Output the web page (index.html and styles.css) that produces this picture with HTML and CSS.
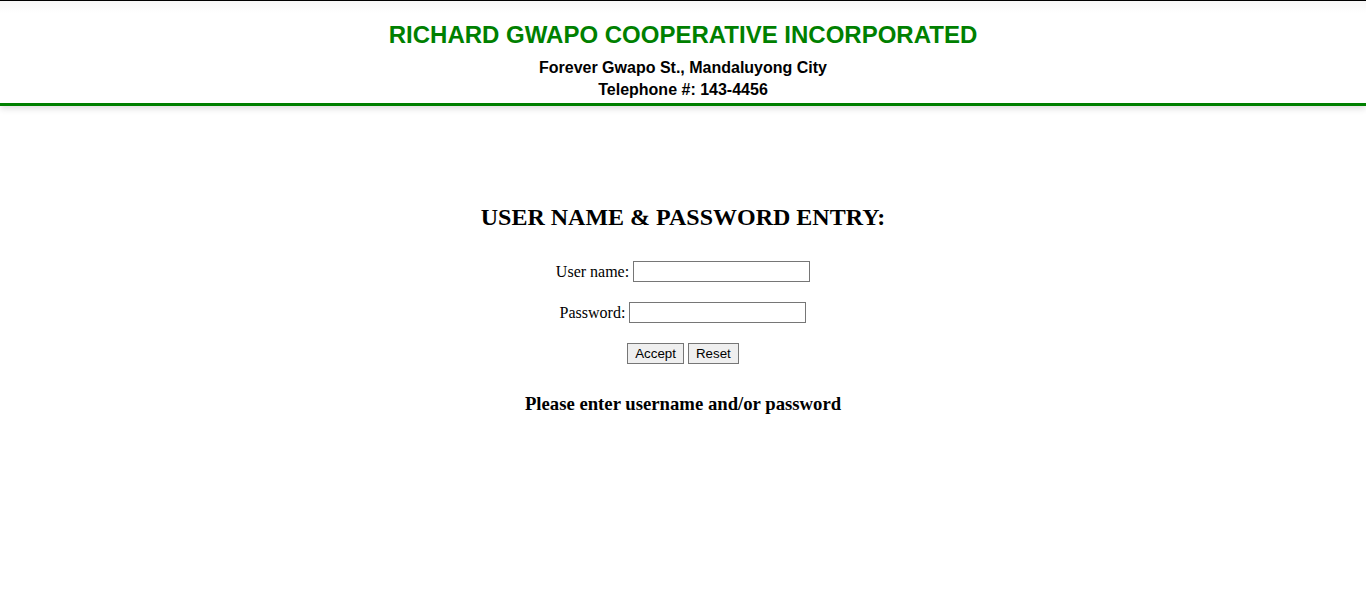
FILE: index.html
```html
<!DOCTYPE html>
<html>
<head>
<meta charset="utf-8">
<title>Login</title>
<link rel="stylesheet" href="styles.css">
</head>
<body>
<header class="site-header">
  <h1 class="site-title">RICHARD GWAPO COOPERATIVE INCORPORATED</h1>
  <p class="site-info">Forever Gwapo St., Mandaluyong City</p>
  <p class="site-info">Telephone #: 143-4456</p>
</header>
<main class="login">
  <h2 class="login-title">USER NAME &amp; PASSWORD ENTRY:</h2>
  <form class="login-form">
    <div class="form-row"><label>User name: <input type="text" class="field"></label></div>
    <div class="form-row"><label>Password: <input type="password" class="field"></label></div>
    <div class="form-row buttons"><button type="button" class="btn">Accept</button><button type="reset" class="btn">Reset</button></div>
  </form>
  <h3 class="login-message">Please enter username and/or password</h3>
</main>
</body>
</html>
```
FILE: styles.css
```css
html, body {
  margin: 0;
  padding: 0;
  background: #fff;
}
body {
  font-family: "Liberation Serif", "Times New Roman", serif;
  color: #000;
}
.site-header {
  border-top: 1px solid #000;
  border-bottom: 3px solid #008000;
  box-shadow: 0 3px 6px rgba(0, 0, 0, 0.12);
  padding: 20px 0 2px;
  text-align: center;
  font-family: "Liberation Sans", Arial, sans-serif;
  background: linear-gradient(#f7f7f7 0, #fff 12px);
}
.site-title {
  margin: 0 0 8px;
  font-size: 24px;
  line-height: 28px;
  font-weight: bold;
  color: #008000;
}
.site-info {
  margin: 0;
  font-size: 16px;
  line-height: 22px;
  font-weight: bold;
}
.login {
  text-align: center;
  padding-top: 97px;
}
.login-title {
  margin: 0 0 30px;
  font-size: 24px;
  line-height: 28px;
  font-weight: bold;
}
.login-form {
  margin: 0;
}
.form-row {
  height: 21px;
  line-height: 21px;
  font-size: 16px;
  margin-bottom: 20px;
}
.field {
  box-sizing: border-box;
  width: 177px;
  height: 21px;
  border: 1px solid #767676;
  padding: 1px 2px;
  vertical-align: top;
  font-size: 13px;
}
.buttons {
  display: flex;
  justify-content: center;
  gap: 4px;
}
.btn {
  box-sizing: border-box;
  height: 21px;
  padding: 0 7px;
  border: 1px solid #767676;
  background: #efefef;
  font-family: "Liberation Sans", Arial, sans-serif;
  font-size: 13.33px;
  line-height: 19px;
  color: #000;
}
.login-message {
  margin: 29px 0 0;
  font-size: 18.72px;
  line-height: 22px;
  font-weight: bold;
}
```
